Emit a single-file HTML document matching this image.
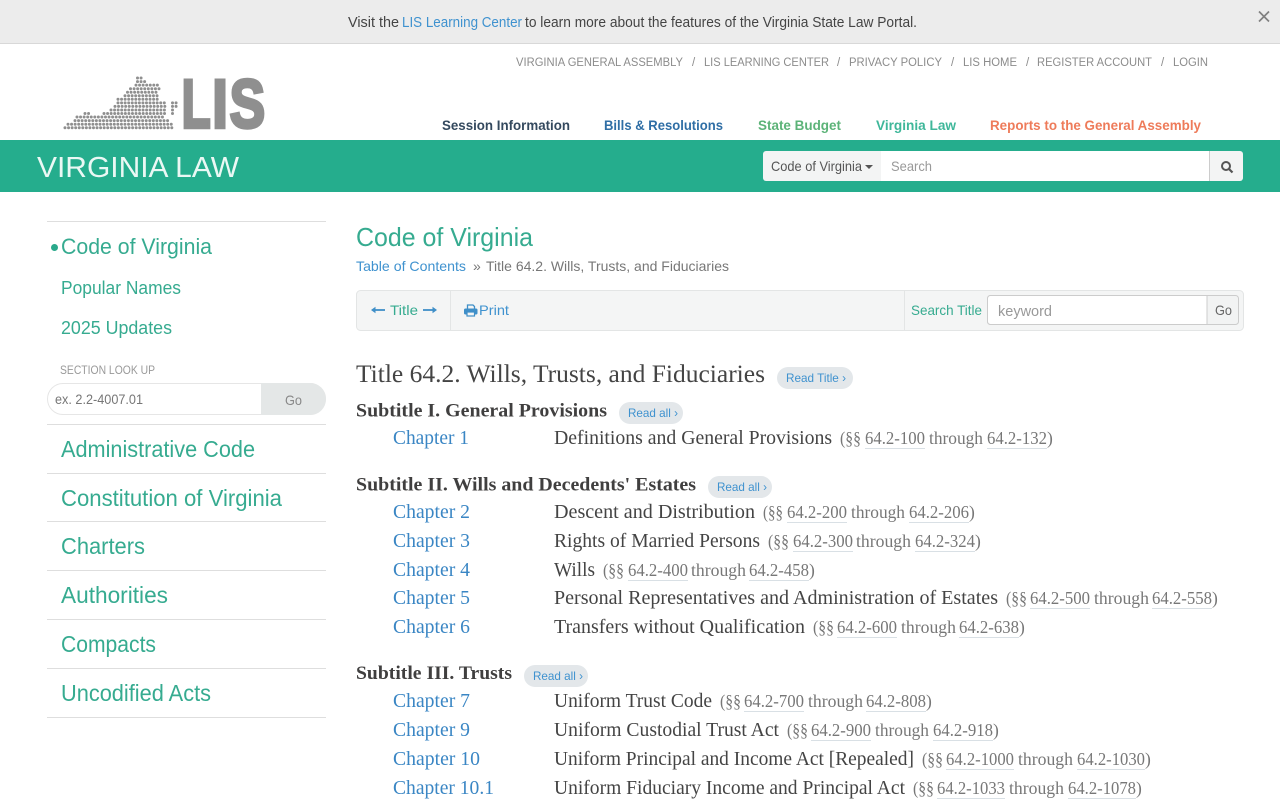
<!DOCTYPE html>
<html lang="en"><head><meta charset="utf-8"><title>Title 64.2. Wills, Trusts, and Fiduciaries</title>
<style>
html,body{margin:0;padding:0;background:#fff;width:1280px;height:800px;overflow:hidden}
svg{display:block}
text{font-family:"Liberation Sans",sans-serif;white-space:pre}
.n{font-size:11.5px;fill:#8c8c8c}
.m{font-size:14px;font-weight:700}
.g{fill:#36ab90}
.b{fill:#3f92cf}
.s{font-family:"Liberation Serif",serif}
.h{font-size:25px;fill:#444}
.st{font-size:19px;font-weight:700;fill:#403f3f}
.c{font-size:20px;fill:#3a86c4}
.t{font-size:20px;fill:#444}
.r{font-size:17.5px;fill:#777}
.p{font-size:12px;fill:#3f92cf}
.u{stroke:#d9e0e5;stroke-width:1}
.sl{stroke:#dedede;stroke-width:1}
.d{stroke:#8f8f8f;stroke-width:3;stroke-dasharray:0 3.56;stroke-linecap:round;fill:none}
</style></head><body>
<svg width="1280" height="800" viewBox="0 0 1280 800" xmlns="http://www.w3.org/2000/svg">
<rect width="1280" height="800" fill="#fff"/>
<!-- banner -->
<rect width="1280" height="43" fill="#ececec"/><rect y="43" width="1280" height="1" fill="#d8d8d8"/>
<text x="348" y="27" font-size="15" fill="#444" textLength="51" lengthAdjust="spacingAndGlyphs">Visit the</text>
<text x="402" y="27" font-size="15" class="b" textLength="120" lengthAdjust="spacingAndGlyphs">LIS Learning Center</text>
<text x="525" y="27" font-size="15" fill="#444" textLength="392" lengthAdjust="spacingAndGlyphs">to learn more about the features of the Virginia State Law Portal.</text>
<path d="M1259 11.500l10 10M1269 11.500l-10 10" stroke="#808080" stroke-width="1.700" fill="none"/>
<!-- top nav -->
<text class="n" x="516" y="66" textLength="167" lengthAdjust="spacingAndGlyphs">VIRGINIA GENERAL ASSEMBLY</text>
<text class="n" x="692" y="66">/</text>
<text class="n" x="704" y="66" textLength="125" lengthAdjust="spacingAndGlyphs">LIS LEARNING CENTER</text>
<text class="n" x="837" y="66">/</text>
<text class="n" x="849" y="66" textLength="93" lengthAdjust="spacingAndGlyphs">PRIVACY POLICY</text>
<text class="n" x="951" y="66">/</text>
<text class="n" x="963" y="66" textLength="54" lengthAdjust="spacingAndGlyphs">LIS HOME</text>
<text class="n" x="1026" y="66">/</text>
<text class="n" x="1037" y="66" textLength="115" lengthAdjust="spacingAndGlyphs">REGISTER ACCOUNT</text>
<text class="n" x="1161" y="66">/</text>
<text class="n" x="1173" y="66" textLength="35" lengthAdjust="spacingAndGlyphs">LOGIN</text>
<!-- logo -->
<path class="d" d="M137.500 78H142M137.500 81.600H147M136 85.100H159M130.500 88.700H159M127.500 92.200H159M125 95.800H159M118 99.300H159M118 102.900H167M172.500 102.900H177M115 106.400H167M172.500 106.400H177M111 110H167M172.500 110H174M104 113.500H167M172.500 113.500H174M85 113.500H91M77 117H163M75 120.600H170M68 124.200H173M65 127.700H173"/>
<g fill="#8f8f8f" stroke="#8f8f8f" stroke-width="3.500" font-weight="700" font-size="68.500">
<text x="181.600" y="127.500" textLength="29" lengthAdjust="spacingAndGlyphs">L</text>
<text x="212.300" y="127.500" textLength="15.600" lengthAdjust="spacingAndGlyphs">I</text>
<text x="229.600" y="127.500" textLength="35.500" lengthAdjust="spacingAndGlyphs">S</text>
</g>
<!-- main nav -->
<text class="m" x="442" y="130" fill="#34495e" textLength="128" lengthAdjust="spacingAndGlyphs">Session Information</text>
<text class="m" x="604" y="130" fill="#2f6ea5" textLength="119" lengthAdjust="spacingAndGlyphs">Bills &amp; Resolutions</text>
<text class="m" x="758" y="130" fill="#5cb378" textLength="83" lengthAdjust="spacingAndGlyphs">State Budget</text>
<text class="m" x="876" y="130" fill="#3fb79a" textLength="80" lengthAdjust="spacingAndGlyphs">Virginia Law</text>
<text class="m" x="990" y="130" fill="#ee7b5a" textLength="211" lengthAdjust="spacingAndGlyphs">Reports to the General Assembly</text>
<!-- green bar -->
<rect y="140" width="1280" height="52" fill="#25ad8d"/>
<text x="37" y="177" font-size="29" fill="#eaf8f4" textLength="202" lengthAdjust="spacingAndGlyphs">VIRGINIA LAW</text>
<rect x="763" y="151" width="480" height="30" rx="3" fill="#f3f4f4"/>
<rect x="881" y="151" width="329" height="30" fill="#fff"/>
<rect x="1209" y="151" width="1" height="30" fill="#ccc"/>
<text x="771" y="171" font-size="14" fill="#555" textLength="91" lengthAdjust="spacingAndGlyphs">Code of Virginia</text>
<path d="M865 165h8l-4 4z" fill="#555"/>
<text x="891" y="171" font-size="14" fill="#999" textLength="41" lengthAdjust="spacingAndGlyphs">Search</text>
<circle cx="1226" cy="166" r="4" fill="none" stroke="#555" stroke-width="2"/><path d="M1229 169l3.500 3.500" stroke="#555" stroke-width="2.200"/>
<!-- sidebar -->
<path class="sl" d="M47 221.500H326M47 424.500H326M47 473.500H326M47 521.500H326M47 570.500H326M47 619.500H326M47 668.500H326M47 717.500H326"/>
<circle cx="54.500" cy="247.500" r="3.500" fill="#2aa98b"/>
<text class="g" x="61" y="254" font-size="22" textLength="151" lengthAdjust="spacingAndGlyphs">Code of Virginia</text>
<text class="g" x="61" y="294" font-size="18" textLength="120" lengthAdjust="spacingAndGlyphs">Popular Names</text>
<text class="g" x="61" y="334" font-size="18" textLength="111" lengthAdjust="spacingAndGlyphs">2025 Updates</text>
<text x="60" y="374" font-size="11.500" fill="#999" textLength="95" lengthAdjust="spacingAndGlyphs">SECTION LOOK UP</text>
<rect x="47.500" y="383.500" width="278" height="31" rx="15.500" fill="#fff" stroke="#e6e6e6"/>
<path d="M261 383h49a16 16 0 0 1 0 32h-49z" fill="#e4e7e7"/>
<text x="55" y="404" font-size="14" fill="#777" textLength="88" lengthAdjust="spacingAndGlyphs">ex. 2.2-4007.01</text>
<text x="285" y="405" font-size="14" fill="#888" textLength="17" lengthAdjust="spacingAndGlyphs">Go</text>
<g class="g" font-size="23">
<text x="61" y="457" textLength="194" lengthAdjust="spacingAndGlyphs">Administrative Code</text>
<text x="61" y="506" textLength="221" lengthAdjust="spacingAndGlyphs">Constitution of Virginia</text>
<text x="61" y="554" textLength="84" lengthAdjust="spacingAndGlyphs">Charters</text>
<text x="61" y="603" textLength="107" lengthAdjust="spacingAndGlyphs">Authorities</text>
<text x="61" y="652" textLength="95" lengthAdjust="spacingAndGlyphs">Compacts</text>
<text x="61" y="701" textLength="150" lengthAdjust="spacingAndGlyphs">Uncodified Acts</text>
</g>
<!-- main head -->
<text class="g" x="356" y="246" font-size="26" textLength="177" lengthAdjust="spacingAndGlyphs">Code of Virginia</text>
<text class="b" x="356" y="271" font-size="14" textLength="110" lengthAdjust="spacingAndGlyphs">Table of Contents</text>
<text x="473" y="271" font-size="14" fill="#777">»</text>
<text x="486" y="271" font-size="14" fill="#777" textLength="243" lengthAdjust="spacingAndGlyphs">Title 64.2. Wills, Trusts, and Fiduciaries</text>
<!-- toolbar -->
<rect x="356.500" y="290.500" width="887" height="40" rx="4" fill="#f4f5f5" stroke="#e3e5e5"/>
<path d="M450.500 291V330M904.500 291V330" stroke="#e3e5e5"/>
<path d="M374 310h11" stroke="#3f8fc8" stroke-width="1.800" fill="none"/><path d="M371 310l4.500-3.200v6.400z" fill="#3f8fc8"/>
<text class="g" x="390" y="315" font-size="14" textLength="28" lengthAdjust="spacingAndGlyphs">Title</text>
<path d="M423 310h11" stroke="#3f8fc8" stroke-width="1.800" fill="none"/><path d="M437 310l-4.500-3.200v6.400z" fill="#3f8fc8"/>
<path d="M467.500 309v-4h5.500l1.500 1.500v2.500" fill="none" stroke="#3f8fc8" stroke-width="1.300"/>
<rect x="464" y="308.500" width="13.500" height="6" rx="1.500" fill="#3f8fc8"/>
<rect x="467" y="312" width="7.500" height="4" fill="#f4f5f5" stroke="#3f8fc8" stroke-width="1.200"/>
<text class="b" x="479" y="315" font-size="14" textLength="30" lengthAdjust="spacingAndGlyphs">Print</text>
<text class="g" x="911" y="315" font-size="14" textLength="71" lengthAdjust="spacingAndGlyphs">Search Title</text>
<rect x="987.500" y="295.500" width="251" height="29" rx="3" fill="#f2f3f3" stroke="#ccc"/>
<path d="M990.500 295.500H1207V324.500H990.500a3 3 0 0 1-3-3v-23a3 3 0 0 1 3-3z" fill="#fff" stroke="#ccc"/>
<text x="998" y="316" font-size="15" fill="#999" textLength="54" lengthAdjust="spacingAndGlyphs">keyword</text>
<text x="1215" y="315" font-size="14" fill="#666" textLength="17" lengthAdjust="spacingAndGlyphs">Go</text>
<!-- title -->
<text class="s h" x="356" y="382" textLength="409" lengthAdjust="spacingAndGlyphs">Title 64.2. Wills, Trusts, and Fiduciaries</text>
<rect x="777" y="367" width="76" height="22" rx="11" fill="#e3e7ea"/>
<text class="p" x="786" y="382" textLength="60" lengthAdjust="spacingAndGlyphs">Read Title ›</text>
<!-- subtitle I -->
<text class="s st" x="356" y="416.500" textLength="251" lengthAdjust="spacingAndGlyphs">Subtitle I. General Provisions</text>
<rect x="619" y="402" width="64" height="22" rx="11" fill="#e3e7ea"/>
<text class="p" x="628" y="417" textLength="50" lengthAdjust="spacingAndGlyphs">Read all ›</text>
<text class="s c" x="393" y="444" textLength="76" lengthAdjust="spacingAndGlyphs">Chapter 1</text>
<text class="s t" x="554" y="444" textLength="278" lengthAdjust="spacingAndGlyphs">Definitions and General Provisions</text>
<text class="s r" x="840" y="444" textLength="21" lengthAdjust="spacingAndGlyphs">(§§</text>
<text class="s r" x="865" y="444" textLength="60" lengthAdjust="spacingAndGlyphs">64.2-100</text>
<text class="s r" x="929" y="444" textLength="54" lengthAdjust="spacingAndGlyphs">through</text>
<text class="s r" x="987" y="444" textLength="60" lengthAdjust="spacingAndGlyphs">64.2-132</text>
<text class="s r" x="1047" y="444">)</text>
<path class="u" d="M865 448.500h60M987 448.500h60"/>
<!-- subtitle II -->
<text class="s st" x="356" y="490.500" textLength="340" lengthAdjust="spacingAndGlyphs">Subtitle II. Wills and Decedents' Estates</text>
<rect x="708" y="476" width="64" height="22" rx="11" fill="#e3e7ea"/>
<text class="p" x="717" y="491" textLength="50" lengthAdjust="spacingAndGlyphs">Read all ›</text>

<text class="s c" x="393" y="518" textLength="77" lengthAdjust="spacingAndGlyphs">Chapter 2</text>
<text class="s t" x="554" y="518" textLength="201" lengthAdjust="spacingAndGlyphs">Descent and Distribution</text>
<text class="s r" x="763" y="518" textLength="20" lengthAdjust="spacingAndGlyphs">(§§</text>
<text class="s r" x="787" y="518" textLength="60" lengthAdjust="spacingAndGlyphs">64.2-200</text>
<text class="s r" x="851" y="518" textLength="54" lengthAdjust="spacingAndGlyphs">through</text>
<text class="s r" x="909" y="518" textLength="60" lengthAdjust="spacingAndGlyphs">64.2-206</text>
<text class="s r" x="969" y="518">)</text>
<path class="u" d="M787 522.500h60M909 522.500h60"/>

<text class="s c" x="393" y="547" textLength="77" lengthAdjust="spacingAndGlyphs">Chapter 3</text>
<text class="s t" x="554" y="547" textLength="206" lengthAdjust="spacingAndGlyphs">Rights of Married Persons</text>
<text class="s r" x="768" y="547" textLength="21" lengthAdjust="spacingAndGlyphs">(§§</text>
<text class="s r" x="793" y="547" textLength="60" lengthAdjust="spacingAndGlyphs">64.2-300</text>
<text class="s r" x="856" y="547" textLength="55" lengthAdjust="spacingAndGlyphs">through</text>
<text class="s r" x="915" y="547" textLength="60" lengthAdjust="spacingAndGlyphs">64.2-324</text>
<text class="s r" x="975" y="547">)</text>
<path class="u" d="M793 551.500h60M915 551.500h60"/>

<text class="s c" x="393" y="576" textLength="77" lengthAdjust="spacingAndGlyphs">Chapter 4</text>
<text class="s t" x="554" y="576" textLength="41" lengthAdjust="spacingAndGlyphs">Wills</text>
<text class="s r" x="603" y="576" textLength="21" lengthAdjust="spacingAndGlyphs">(§§</text>
<text class="s r" x="628" y="576" textLength="60" lengthAdjust="spacingAndGlyphs">64.2-400</text>
<text class="s r" x="691" y="576" textLength="55" lengthAdjust="spacingAndGlyphs">through</text>
<text class="s r" x="749" y="576" textLength="60" lengthAdjust="spacingAndGlyphs">64.2-458</text>
<text class="s r" x="809" y="576">)</text>
<path class="u" d="M628 580.500h60M749 580.500h60"/>

<text class="s c" x="393" y="604" textLength="77" lengthAdjust="spacingAndGlyphs">Chapter 5</text>
<text class="s t" x="554" y="604" textLength="444" lengthAdjust="spacingAndGlyphs">Personal Representatives and Administration of Estates</text>
<text class="s r" x="1006" y="604" textLength="21" lengthAdjust="spacingAndGlyphs">(§§</text>
<text class="s r" x="1030" y="604" textLength="60" lengthAdjust="spacingAndGlyphs">64.2-500</text>
<text class="s r" x="1094" y="604" textLength="55" lengthAdjust="spacingAndGlyphs">through</text>
<text class="s r" x="1152" y="604" textLength="60" lengthAdjust="spacingAndGlyphs">64.2-558</text>
<text class="s r" x="1212" y="604">)</text>
<path class="u" d="M1030 608.500h60M1152 608.500h60"/>

<text class="s c" x="393" y="633" textLength="77" lengthAdjust="spacingAndGlyphs">Chapter 6</text>
<text class="s t" x="554" y="633" textLength="251" lengthAdjust="spacingAndGlyphs">Transfers without Qualification</text>
<text class="s r" x="813" y="633" textLength="21" lengthAdjust="spacingAndGlyphs">(§§</text>
<text class="s r" x="837" y="633" textLength="60" lengthAdjust="spacingAndGlyphs">64.2-600</text>
<text class="s r" x="901" y="633" textLength="55" lengthAdjust="spacingAndGlyphs">through</text>
<text class="s r" x="959" y="633" textLength="60" lengthAdjust="spacingAndGlyphs">64.2-638</text>
<text class="s r" x="1019" y="633">)</text>
<path class="u" d="M837 637.500h60M959 637.500h60"/>
<!-- subtitle III -->
<text class="s st" x="356" y="679" textLength="156" lengthAdjust="spacingAndGlyphs">Subtitle III. Trusts</text>
<rect x="524" y="665" width="64" height="22" rx="11" fill="#e3e7ea"/>
<text class="p" x="533" y="680" textLength="50" lengthAdjust="spacingAndGlyphs">Read all ›</text>

<text class="s c" x="393" y="707" textLength="77" lengthAdjust="spacingAndGlyphs">Chapter 7</text>
<text class="s t" x="554" y="707" textLength="158" lengthAdjust="spacingAndGlyphs">Uniform Trust Code</text>
<text class="s r" x="720" y="707" textLength="21" lengthAdjust="spacingAndGlyphs">(§§</text>
<text class="s r" x="744" y="707" textLength="60" lengthAdjust="spacingAndGlyphs">64.2-700</text>
<text class="s r" x="808" y="707" textLength="55" lengthAdjust="spacingAndGlyphs">through</text>
<text class="s r" x="866" y="707" textLength="60" lengthAdjust="spacingAndGlyphs">64.2-808</text>
<text class="s r" x="926" y="707">)</text>
<path class="u" d="M744 711.500h60M866 711.500h60"/>

<text class="s c" x="393" y="736" textLength="77" lengthAdjust="spacingAndGlyphs">Chapter 9</text>
<text class="s t" x="554" y="736" textLength="225" lengthAdjust="spacingAndGlyphs">Uniform Custodial Trust Act</text>
<text class="s r" x="787" y="736" textLength="21" lengthAdjust="spacingAndGlyphs">(§§</text>
<text class="s r" x="811" y="736" textLength="60" lengthAdjust="spacingAndGlyphs">64.2-900</text>
<text class="s r" x="875" y="736" textLength="54" lengthAdjust="spacingAndGlyphs">through</text>
<text class="s r" x="933" y="736" textLength="60" lengthAdjust="spacingAndGlyphs">64.2-918</text>
<text class="s r" x="993" y="736">)</text>
<path class="u" d="M811 740.500h60M933 740.500h60"/>

<text class="s c" x="393" y="765" textLength="87" lengthAdjust="spacingAndGlyphs">Chapter 10</text>
<text class="s t" x="554" y="765" textLength="360" lengthAdjust="spacingAndGlyphs">Uniform Principal and Income Act [Repealed]</text>
<text class="s r" x="922" y="765" textLength="21" lengthAdjust="spacingAndGlyphs">(§§</text>
<text class="s r" x="946" y="765" textLength="68" lengthAdjust="spacingAndGlyphs">64.2-1000</text>
<text class="s r" x="1018" y="765" textLength="55" lengthAdjust="spacingAndGlyphs">through</text>
<text class="s r" x="1077" y="765" textLength="68" lengthAdjust="spacingAndGlyphs">64.2-1030</text>
<text class="s r" x="1145" y="765">)</text>
<path class="u" d="M946 769.500h68M1077 769.500h68"/>

<text class="s c" x="393" y="794" textLength="101" lengthAdjust="spacingAndGlyphs">Chapter 10.1</text>
<text class="s t" x="554" y="794" textLength="351" lengthAdjust="spacingAndGlyphs">Uniform Fiduciary Income and Principal Act</text>
<text class="s r" x="913" y="794" textLength="21" lengthAdjust="spacingAndGlyphs">(§§</text>
<text class="s r" x="937" y="794" textLength="68" lengthAdjust="spacingAndGlyphs">64.2-1033</text>
<text class="s r" x="1009" y="794" textLength="55" lengthAdjust="spacingAndGlyphs">through</text>
<text class="s r" x="1068" y="794" textLength="68" lengthAdjust="spacingAndGlyphs">64.2-1078</text>
<text class="s r" x="1136" y="794">)</text>
<path class="u" d="M937 798.500h68M1068 798.500h68"/>
</svg>
</body></html>
